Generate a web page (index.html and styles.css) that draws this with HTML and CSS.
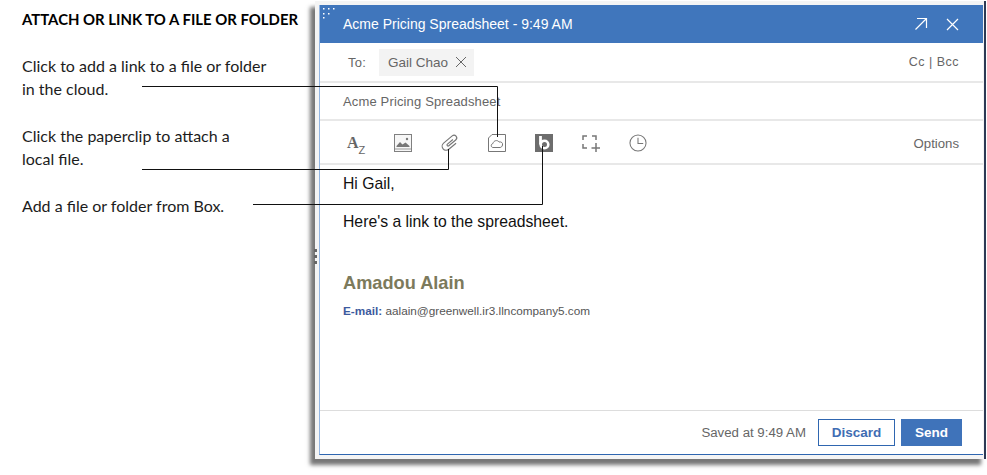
FILE: index.html
```html
<!DOCTYPE html>
<html lang="en">
<head>
    <meta charset="UTF-8">
    <meta name="viewport" content="width=device-width, initial-scale=1.0">
    <title>Attach or link to a file or folder</title>
    <link rel="stylesheet" href="styles.css">
</head>
<body>

    <div class="page">
        <div class="notes">
            <h1>ATTACH OR LINK TO A FILE OR FOLDER</h1>
            <p>Click to add a link to a file or folder<br>in the cloud.</p>
            <p>Click the paperclip to attach a<br>local file.</p>
            <p>Add a file or folder from Box.</p>
        </div>

        <div class="frame">
            <div class="compose">
                <div class="title-bar">
                    <svg class="grip" width="14" height="12" viewBox="0 0 14 12" fill="#fff">
                        <rect x="0" y="0" width="1.5" height="1.5"/><rect x="5" y="0" width="1.5" height="1.5"/><rect x="10" y="0" width="1.5" height="1.5"/>
                        <rect x="0" y="5" width="1.5" height="1.5"/><rect x="5" y="5" width="1.5" height="1.5"/>
                        <rect x="0" y="9" width="1.5" height="1.5"/>
                    </svg>
                    <span class="title">Acme Pricing Spreadsheet - 9:49 AM</span>
                    <svg width="14" height="14" viewBox="0 0 14 14" fill="none" stroke="#fff" stroke-width="1.2">
                        <path d="M1.5 12.5L12.5 1.5M3 1.5H12.5V11"/>
                    </svg>
                    <svg class="close" width="13" height="13" viewBox="0 0 13 13" fill="none" stroke="#fff" stroke-width="1.2">
                        <path d="M1 1L12 12M12 1L1 12"/>
                    </svg>
                </div>

                <div class="row to-row">
                    <span class="to-label">To:</span>
                    <span class="chip">Gail Chao
                        <svg width="12" height="12" viewBox="0 0 12 12" fill="none" stroke="#666" stroke-width="1">
                            <path d="M1 1L11 11M11 1L1 11"/>
                        </svg>
                    </span>
                    <span class="cc">Cc | Bcc</span>
                </div>

                <div class="row subject-row">Acme Pricing Spreadsheet</div>

                <div class="row tool-row">
                    <span class="tool-font">A<sub>Z</sub></span>
                    <svg class="tool" width="18" height="18" viewBox="0 0 18 18">
                        <rect x="0.5" y="0.5" width="17" height="17" fill="#f6f6f6" stroke="#808080"/>
                        <path d="M2.500 12L6 8L8.500 10.500L11.500 8.500L15.500 12V13H2.500Z" fill="#777"/>
                        <circle cx="13" cy="5" r="1.200" fill="#777"/>
                        <path d="M1 15H17" stroke="#999"/>
                    </svg>
                    <svg class="tool" width="18" height="18" viewBox="0 0 20 20" fill="none" stroke="#777" stroke-width="1.300">
                        <path transform="rotate(-40 10 10)" d="M15 14.500H4.500a4.500 4.500 0 0 1 0-9H17a3 3 0 0 1 0 6H7a1.200 1.200 0 0 1 0-2.400H15"/>
                    </svg>
                    <svg class="tool" width="18" height="18" viewBox="0 0 18 18" fill="none" stroke="#777">
                        <path d="M0.500 4L4 0.500H17.500V17.500H0.500Z"/>
                        <path d="M5 13.500C2.800 13.500 2.500 10 5 9.500C5.500 6.500 9.500 5.500 11 8C13.500 7.500 15 9 14.500 11C14.300 12.500 13 13.500 12 13.500Z"/>
                    </svg>
                    <svg class="tool" width="18" height="18" viewBox="0 0 18 18">
                        <rect width="18" height="18" fill="#6d6d6d"/>
                        <path d="M5.500 2V10.500" stroke="#fff" stroke-width="2.800"/>
                        <circle cx="9.500" cy="10.500" r="3.800" fill="none" stroke="#fff" stroke-width="2.600"/>
                    </svg>
                    <svg class="tool" width="18" height="17" viewBox="0 0 18 17" fill="none" stroke="#777" stroke-width="1.500">
                        <path d="M5 1H1V5M10 1H14V5M1 9V13H5M14 8V17M9.500 13H18"/>
                    </svg>
                    <svg class="tool" width="18" height="18" viewBox="0 0 19 19" fill="none" stroke="#777" stroke-width="1.100">
                        <circle cx="9.500" cy="9.500" r="8.500"/>
                        <path d="M9.500 4V10H15"/>
                    </svg>
                    <span class="options">Options</span>
                </div>

                <div class="message">
                    <p>Hi Gail,</p>
                    <p>Here's a link to the spreadsheet.</p>
                    <p class="sig-name">Amadou Alain</p>
                    <p class="sig-mail"><b>E-mail:</b> aalain@greenwell.ir3.llncompany5.com</p>
                </div>

                <div class="footer">
                    <span class="saved">Saved at 9:49 AM</span>
                    <button class="btn discard">Discard</button>
                    <button class="btn send">Send</button>
                </div>
            </div>
        </div>
    </div>

    <!-- callout lines run over both columns -->
    <svg class="callouts" width="987" height="475" viewBox="0 0 987 475" fill="none" stroke="#111" stroke-width="1">
        <path d="M142 86.500H497.500V137"/>
        <path d="M142 169.500H448.500V149"/>
        <path d="M253 204.500H542.500V146"/>
    </svg>
    <svg class="side-grip" width="4" height="16" viewBox="0 0 4 16" fill="#666">
        <rect width="3" height="3"/><rect y="6" width="3" height="3"/><rect y="12" width="3" height="3"/>
    </svg>

</body>
</html>
```

FILE: styles.css
```css
body {
    margin: 0;
    background-color: #fff;
    font-family: "Liberation Sans", Arial, sans-serif;
    position: relative;
    height: 475px;
    overflow: hidden;
}
.page {
    display: flex;
    align-items: flex-start;
    width: 987px;
}

/* left column */
.notes {
    width: 315px;
    flex-shrink: 0;
    padding: 9px 0 0 22px;
    box-sizing: border-box;
    font-family: Lato, "Open Sans", sans-serif;
    font-size: 16px;
    line-height: 23px;
    color: #1c1c1c;
}
.notes h1 {
    margin: 0 0 25px;
    font-size: 14.900px;
    line-height: 20px;
    font-weight: 700;
    color: #000;
    white-space: nowrap;
}
.notes p {
    margin: 0 0 24px;
}

/* window */
.frame {
    width: 671px;
    height: 458px;
    margin-top: 1px;
    flex-shrink: 0;
    box-sizing: border-box;
    padding: 4px 1px 4px 4px;
    background-color: #f4f4f4;
    border-right: 2px solid #2c3a55;
    box-shadow: -5px 6px 4px #777;
}
.compose {
    height: 100%;
    box-sizing: border-box;
    display: flex;
    flex-direction: column;
    background-color: #fff;
    border-left: 1.500px solid #94b6e2;
    border-bottom: 1px solid #2f66b0;
}
.title-bar {
    height: 38px;
    flex-shrink: 0;
    display: flex;
    align-items: center;
    padding: 0 24px 0 23px;
    background-color: #4076bc;
    color: #fff;
    position: relative;
}
.title {
    flex: 1;
    font-size: 14px;
}
.grip {
    position: absolute;
    left: 3px;
    top: 3px;
}
.close {
    margin-left: 18px;
}
.row {
    flex-shrink: 0;
    display: flex;
    align-items: center;
    box-sizing: border-box;
    border-bottom: 2px solid #e8e8e8;
    padding: 0 24px 0 23px;
    font-size: 13px;
    color: #666;
}
.to-row {
    height: 40px;
    letter-spacing: 0.2px;
}
.to-label {
    margin-left: 5px;
    margin-right: 13px;
}
.chip {
    display: flex;
    align-items: center;
    gap: 7px;
    height: 27px;
    padding: 0 7px 0 9px;
    background-color: #f3f3f3;
    font-size: 13.500px;
    letter-spacing: 0;
    color: #666;
}
.cc {
    margin-left: auto;
    font-size: 12.500px;
    letter-spacing: 0.5px;
}
.subject-row {
    height: 38px;
    letter-spacing: 0.15px;
}
.tool-row {
    height: 44px;
    padding-left: 0;
    padding-top: 2px;
}
.tool-font {
    width: 18px;
    margin-left: 27px;
    white-space: nowrap;
    font-family: "Liberation Serif", serif;
    font-weight: 700;
    font-size: 16px;
    line-height: 20px;
    color: #666;
}
.tool-font sub {
    font-family: "Liberation Sans", sans-serif;
    font-weight: 400;
    font-size: 11px;
    line-height: 0;
    vertical-align: -6px;
}
.tool {
    margin-left: 29px;
    flex-shrink: 0;
    overflow: visible;
}
.options {
    margin-left: auto;
    font-size: 13.200px;
}
.message {
    flex: 1;
    padding: 9px 23px 0;
    font-size: 15.750px;
    line-height: 20px;
    color: #111;
}
.message p {
    margin: 0 0 18px;
}
.message .sig-name {
    margin: 41px 0 8px;
    font-size: 18.200px;
    font-weight: 700;
    color: #7c7a5c;
}
.message .sig-mail {
    font-size: 11.750px;
    color: #555;
}
.sig-mail b {
    color: #3c5a9e;
}
.footer {
    flex-shrink: 0;
    height: 44px;
    box-sizing: border-box;
    display: flex;
    align-items: center;
    justify-content: flex-end;
    gap: 6px;
    padding-right: 21px;
    border-top: 1px solid #ddd;
}
.saved {
    margin-right: 6px;
    font-size: 13.250px;
    color: #666;
}
.btn {
    height: 27px;
    box-sizing: border-box;
    border-radius: 0;
    font-family: "Liberation Sans", Arial, sans-serif;
    font-size: 13.500px;
    font-weight: 700;
    cursor: pointer;
}
.discard {
    width: 77px;
    background-color: #fff;
    border: 1px solid #2f66b0;
    color: #3f6db3;
}
.send {
    width: 61px;
    background-color: #3f73ba;
    border: none;
    color: #fff;
}

/* things laid over the page */
.callouts {
    position: absolute;
    left: 0;
    top: 0;
    pointer-events: none;
}
.side-grip {
    position: absolute;
    left: 314px;
    top: 249px;
}
```
